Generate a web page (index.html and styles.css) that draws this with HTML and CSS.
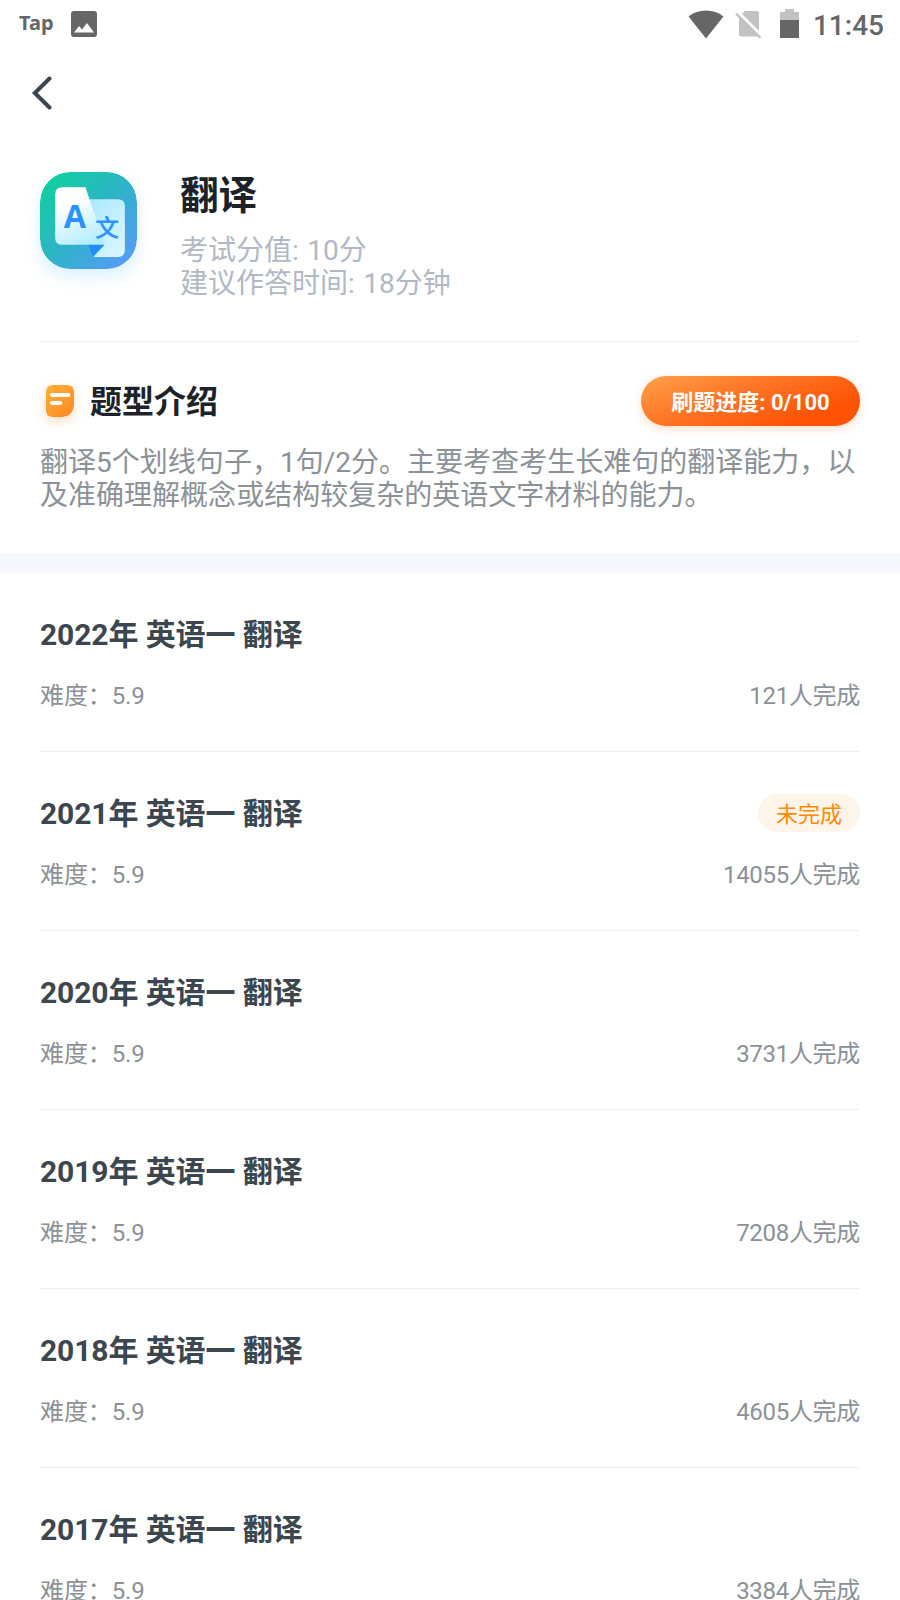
FILE: index.html
```html
<!DOCTYPE html>
<html lang="zh-CN">
<head>
    <meta charset="UTF-8">
    <meta name="viewport" content="width=device-width, initial-scale=1.0">
    <title>翻译</title>
    <link rel="stylesheet" href="styles.css">
</head>
<body>
    <div class="status-bar">
        <div class="status-left">
            <span class="tap-logo">Tap</span>
            <svg class="icon-image" width="26" height="26" viewBox="0 0 26 26">
                <rect width="26" height="26" rx="3" fill="#666"/>
                <path d="M3 21.5 L8 15 L11 18.6 L16 12 L23 21.5 Z" fill="#fff"/>
            </svg>
        </div>
        <div class="status-right">
            <svg class="icon-wifi" width="36" height="29" viewBox="0 0 36 29">
                <path d="M18 28.5 L0.6 6.4 C5.4 2.6 11.4 0.5 18 0.5 C24.6 0.5 30.6 2.6 35.4 6.4 Z" fill="#666"/>
            </svg>
            <svg class="icon-sim" width="27" height="29" viewBox="0 0 27 29">
                <path d="M10 1 H21.5 Q24 1 24 3.5 V24 Q24 26.5 21.5 26.5 H6.5 Q4 26.5 4 24 V7 Z" fill="#c2c2c2"/>
                <path d="M2.6 1.6 L27.6 26.6" stroke="#fff" stroke-width="3"/>
                <path d="M1 3.5 L25.4 27.9" stroke="#c2c2c2" stroke-width="2.4"/>
            </svg>
            <svg class="icon-battery" width="19" height="29" viewBox="0 0 19 29">
                <path d="M5 0 H14 V3 H19 V11 H0 V3 H5 Z" fill="#c2c2c2"/>
                <rect y="11" width="19" height="18" fill="#666"/>
            </svg>
            <span class="clock">11:45</span>
        </div>
    </div>

    <div class="nav-bar">
        <svg width="22" height="34" viewBox="0 0 22 34">
            <path d="M18.5 2.5 L3.8 17 L18.5 31.5" fill="none" stroke="#3c464f" stroke-width="4" stroke-linecap="round"/>
        </svg>
    </div>

    <div class="header">
        <svg class="app-icon" width="97" height="97" viewBox="0 0 96 96">
            <defs>
                <linearGradient id="bg" x1="0" y1="0" x2="1" y2="1">
                    <stop offset="0.08" stop-color="#10cf9e"/>
                    <stop offset="0.5" stop-color="#2eb3c8"/>
                    <stop offset="0.92" stop-color="#549cf6"/>
                </linearGradient>
                <linearGradient id="front" x1="0.35" y1="0.1" x2="0.65" y2="1">
                    <stop offset="0.15" stop-color="#fff"/>
                    <stop offset="1" stop-color="#b2edff"/>
                </linearGradient>
                <linearGradient id="back" x1="0" y1="0" x2="0.8" y2="1">
                    <stop offset="0" stop-color="#a9e7fc"/>
                    <stop offset="1" stop-color="#d8f6ff"/>
                </linearGradient>
            </defs>
            <rect width="96" height="96" rx="30" fill="url(#bg)"/>
            <path d="M46 27 H77 Q84 27 84 34 V77 Q84 84 77 84 H53 Z" fill="url(#back)"/>
            <path d="M22 15 H45 L64 72 H22 Q15 72 15 65 V22 Q15 15 22 15 Z" fill="url(#front)"/>
            <path d="M48 72 H64 L52.5 84 Z" fill="#1f8dff"/>
            <text class="glyph-en" x="23.5" y="55.5">A</text>
            <text class="glyph-zh" x="55" y="63.3">文</text>
        </svg>
        <div class="header-info">
            <h1>翻译</h1>
            <p>考试分值: 10分</p>
            <p>建议作答时间: 18分钟</p>
        </div>
    </div>

    <div class="intro">
        <div class="intro-head">
            <svg class="intro-icon" width="28" height="32" viewBox="0 0 28 32">
                <defs>
                    <linearGradient id="note" x1="0" y1="0" x2="0.7" y2="1">
                        <stop offset="0" stop-color="#ffb03a"/>
                        <stop offset="1" stop-color="#ff8c26"/>
                    </linearGradient>
                </defs>
                <path d="M6 0 H22 Q28 0 28 6 V20 Q28 32 16 32 H6 Q0 32 0 26 V6 Q0 0 6 0 Z" fill="url(#note)"/>
                <path d="M6 10 H22.3 M6 18 H14.2" stroke="#fff" stroke-width="4" stroke-linecap="round"/>
            </svg>
            <h2>题型介绍</h2>
            <div class="progress-btn">刷题进度: 0/100</div>
        </div>
        <p class="intro-text">翻译5个划线句子，1句/2分。主要考查考生长难句的翻译能力，以及准确理解概念或结构较复杂的英语文字材料的能力。</p>
    </div>

    <div class="list">
        <div class="item">
            <div class="item-title"><h3>2022年 英语一 翻译</h3></div>
            <div class="item-meta"><span>难度：5.9</span><span class="count">121人完成</span></div>
        </div>
        <div class="item">
            <div class="item-title"><h3>2021年 英语一 翻译</h3><span class="tag">未完成</span></div>
            <div class="item-meta"><span>难度：5.9</span><span class="count">14055人完成</span></div>
        </div>
        <div class="item">
            <div class="item-title"><h3>2020年 英语一 翻译</h3></div>
            <div class="item-meta"><span>难度：5.9</span><span class="count">3731人完成</span></div>
        </div>
        <div class="item">
            <div class="item-title"><h3>2019年 英语一 翻译</h3></div>
            <div class="item-meta"><span>难度：5.9</span><span class="count">7208人完成</span></div>
        </div>
        <div class="item">
            <div class="item-title"><h3>2018年 英语一 翻译</h3></div>
            <div class="item-meta"><span>难度：5.9</span><span class="count">4605人完成</span></div>
        </div>
        <div class="item">
            <div class="item-title"><h3>2017年 英语一 翻译</h3></div>
            <div class="item-meta"><span>难度：5.9</span><span class="count">3384人完成</span></div>
        </div>
    </div>
</body>
</html>
```
FILE: styles.css
```css
* {
    box-sizing: border-box;
}

body {
    margin: 0;
    height: 1600px;
    overflow: hidden;
    font-family: Roboto, "Noto Sans CJK SC", sans-serif;
    background-color: #fff;
    color: #1c2328;
}

h1, h2, h3, p {
    margin: 0;
}

svg {
    display: block;
    flex-shrink: 0;
}

/* status bar */
.status-bar {
    display: flex;
    justify-content: space-between;
    height: 48px;
    padding: 0 16px 0 19px;
    color: #666;
}

.status-left,
.status-right {
    display: flex;
    align-items: center;
}

.tap-logo {
    width: 52px;
    font-family: "Noto Sans", sans-serif;
    font-size: 20px;
    font-weight: bold;
    line-height: 45px;
    height: 48px;
}

.icon-sim {
    margin-left: 11px;
}

.icon-battery {
    margin-left: 18px;
    margin-top: -2px;
}

.clock {
    margin-left: 14px;
    padding-top: 3px;
    font-size: 28px;
    font-weight: 500;
    line-height: 48px;
}

/* back arrow */
.nav-bar {
    display: flex;
    align-items: center;
    height: 90px;
    padding-left: 31px;
}

/* header */
.header {
    display: flex;
    gap: 43px;
    height: 204px;
    margin: 0 40px;
    padding-top: 34px;
    border-bottom: 1px solid #f0f0f0;
}

.app-icon {
    border-radius: 30px;
    box-shadow: 0 8px 16px rgba(80, 190, 255, 0.22);
}

.glyph-en {
    font-family: "Open Sans", sans-serif;
    font-size: 32px;
    font-weight: bold;
    fill: #2b93ff;
}

.glyph-zh {
    font-size: 23px;
    fill: #2b93ff;
    stroke: #2b93ff;
    stroke-width: 0.8px;
}

.header-info h1 {
    margin-bottom: 14px;
    font-size: 38.5px;
    line-height: 48px;
}

.header-info p {
    font-size: 28px;
    line-height: 33px;
    word-spacing: 1.5px;
    color: #b1b8c3;
}

/* intro */
.intro {
    height: 231px;
    padding: 34px 40px 0;
    border-bottom: 20px solid #f6f7fc;
}

.intro-head {
    display: flex;
    align-items: center;
    height: 50px;
    margin-bottom: 20px;
}

.intro-icon {
    margin: 0 16px 0 6px;
    border-radius: 6px 6px 12px 6px;
    box-shadow: 0 4px 12px rgba(255, 140, 38, 0.3);
}

.intro-head h2 {
    padding-top: 2px;
    font-size: 32px;
    line-height: 50px;
}

.progress-btn {
    width: 219px;
    height: 50px;
    margin-left: auto;
    border-radius: 25px;
    background: linear-gradient(160deg, #ffa24d 0%, #ff7a2a 35%, #ff5203 80%);
    box-shadow: 0 3px 10px rgba(255, 98, 20, 0.22);
    font-size: 22px;
    font-weight: bold;
    line-height: 54px;
    text-align: center;
    color: #fff;
}

.intro-text {
    font-size: 28px;
    line-height: 33px;
    letter-spacing: 0.02px;
    color: #8b9197;
}

/* list */
.list {
    padding: 0 40px;
}

.item {
    height: 179px;
    padding-top: 40px;
    border-bottom: 1px solid #f0f0f0;
}

.item-title,
.item-meta {
    display: flex;
    align-items: center;
    justify-content: space-between;
}

.item-title {
    height: 42px;
    margin-bottom: 23px;
}

.item-title h3 {
    padding-top: 2px;
    font-size: 30px;
    line-height: 42px;
    letter-spacing: -0.1px;
    color: #3c464f;
}

.tag {
    width: 102px;
    height: 38px;
    border-radius: 19px;
    background-color: #fff4e9;
    font-size: 22px;
    line-height: 42px;
    text-align: center;
    color: #ff8a00;
}

.item-meta {
    font-size: 24px;
    line-height: 36px;
    letter-spacing: -0.1px;
    color: #8b9197;
}

.count {
    letter-spacing: -0.3px;
}
```
